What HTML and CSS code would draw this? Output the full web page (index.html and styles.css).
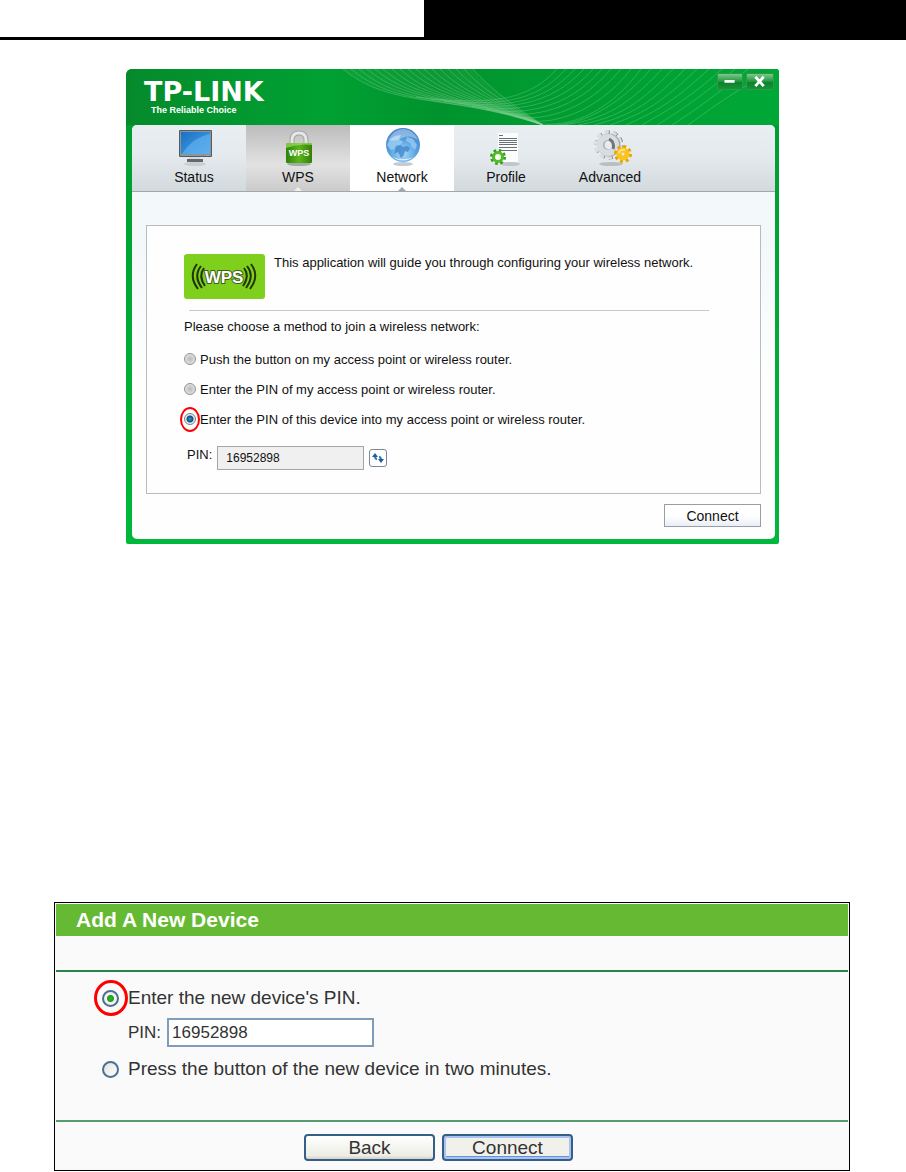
FILE: index.html
```html
<!DOCTYPE html>
<html lang="en">
<head>
    <meta charset="UTF-8">
    <meta name="viewport" content="width=device-width, initial-scale=1.0">
    <title>WPS Setup</title>
    <link rel="stylesheet" href="styles.css">
</head>
<body>
    <header class="page-header">
        <div class="page-header-left"></div>
        <div class="page-header-right"></div>
    </header>

    <!-- Wireless utility -->
    <section class="utility">
        <div class="titlebar">
            <svg class="waves" viewBox="0 0 653 56" preserveAspectRatio="none" aria-hidden="true">
                <path class="wave-fill" d="M217 0C265 40 320 24 417 56C385 35 365 20 347 0Z"/>
                <path class="wave-left" d="M217 0C265 40 320 24 417 56M225 0C271 39 324 25 417 56M233 0C277 38 328 25 417 56M241 0C284 36 332 26 417 56M249 0C290 35 336 27 417 56M257 0C296 34 340 27 417 56M266 0C302 33 344 28 417 56M274 0C308 32 348 29 417 56M282 0C315 30 352 30 417 56M290 0C321 29 356 30 417 56M298 0C327 28 360 31 417 56M306 0C333 27 364 32 417 56M314 0C339 26 368 32 417 56M322 0C346 24 372 33 417 56M330 0C352 23 376 34 417 56M338 0C358 22 380 34 417 56M347 0C365 20 385 35 417 56"/>
                <path class="wave-right" d="M431 0C400 34 360 36 290 28M440 0C408 35 368 38 304 30M449 0C416 36 374 40 318 32M458 0C424 37 380 42 332 34M467 0C434 38 388 44 346 37M476 0C442 40 396 47 360 40M485 0C450 42 404 50 374 43M495 0C458 45 412 53 388 47M505 0C468 48 420 56 400 51M515 0C478 50 436 59 410 54M525 0C488 42 450 58 420 56M536 0C498 42 470 52 436 56M547 0C508 42 484 50 452 56M559 0C520 40 498 48 468 56M571 0C532 38 512 46 484 56M583 0C544 36 526 44 500 56M596 0C560 32 540 42 516 56M609 0C574 28 554 42 531 56M622 0C590 26 568 42 546 56M636 8C602 26 582 42 562 56"/>
            </svg>
            <div class="brand">
                <span class="brand-name">TP-LINK</span>
                <span class="brand-tagline">The Reliable Choice</span>
            </div>
            <div class="window-buttons">
                <button type="button" class="window-button" aria-label="Minimize">
                    <svg viewBox="0 0 26 16"><path d="M7 8H18"/></svg>
                </button>
                <button type="button" class="window-button" aria-label="Close">
                    <svg viewBox="0 0 28 16"><path d="M9 3L18 13M18 3L9 13"/></svg>
                </button>
            </div>
        </div>

        <div class="utility-body">
            <nav class="tabs">
                <a href="#status" class="tab">
                    <svg class="tab-icon" viewBox="0 0 48 40">
                        <defs>
                            <linearGradient id="screen" x1="0" y1="0" x2="1" y2="1">
                                <stop offset="0" stop-color="#1a70c2"/>
                                <stop offset="1" stop-color="#4aa5ec"/>
                            </linearGradient>
                        </defs>
                        <ellipse cx="25" cy="37" rx="11" ry="2" fill="#c9ced1"/>
                        <path d="M19 29H30V33H19Z" fill="#d5dadd"/>
                        <path d="M17 32H33V35H17Z" fill="#62686d"/>
                        <rect x="9" y="3" width="33" height="27" rx="1" fill="#515c66"/>
                        <rect x="10" y="4" width="31" height="25" fill="#8a969e"/>
                        <rect x="11" y="5" width="29" height="22" fill="url(#screen)"/>
                        <path d="M40 7Q23 10 12 27H40Z" fill="#68b7f1" opacity=".6"/>
                        <path d="M36 28.500h3" stroke="#ee8f46"/>
                    </svg>
                    Status
                </a>
                <a href="#wps" class="tab tab-hover">
                    <svg class="tab-icon" viewBox="0 0 48 40">
                        <defs>
                            <linearGradient id="lock">
                                <stop offset="0" stop-color="#2d8308"/>
                                <stop offset=".5" stop-color="#5cb51d"/>
                                <stop offset="1" stop-color="#327f08"/>
                            </linearGradient>
                        </defs>
                        <ellipse cx="25" cy="37" rx="12" ry="2" fill="#a5aaa2"/>
                        <path d="M18 18V13Q18 6 25 6T32 13V18" fill="none" stroke="#a5a5a5" stroke-width="5"/>
                        <path d="M18 18V13Q18 6 25 6T32 13V18" fill="none" stroke="#e6e6e6" stroke-width="3"/>
                        <rect x="12" y="16" width="26" height="20" rx="1" fill="url(#lock)"/>
                        <path d="M12 16H38V18Q25 16 12 21Z" fill="#a4db62" opacity=".7"/>
                        <text x="25" y="29" text-anchor="middle" class="lock-text">WPS</text>
                    </svg>
                    WPS
                </a>
                <a href="#network" class="tab tab-active">
                    <svg class="tab-icon" viewBox="0 0 48 40">
                        <defs>
                            <radialGradient id="globe" cx=".5" cy=".75" r=".75">
                                <stop offset="0" stop-color="#a6dcfa"/>
                                <stop offset=".55" stop-color="#559fe0"/>
                                <stop offset="1" stop-color="#3d80c8"/>
                            </radialGradient>
                        </defs>
                        <ellipse cx="25" cy="37" rx="10" ry="2" fill="#c5cbd1"/>
                        <circle cx="25" cy="18" r="17" fill="url(#globe)"/>
                        <path d="M9 18Q11 12 17 9L23 8 21 12 25 15 22 18 18 18 16 22 13 23Z" fill="#9ccff3" opacity=".8"/>
                        <path d="M18 20L22 18 25 20 29 19 32 21 30 25 27 24 26 28 23 31 20 25 16 27Z" fill="#3b82c7" opacity=".75"/>
                        <path d="M29 10L35 12 39 18 37 23 34 20 32 16 28 14Z" fill="#9ccff3" opacity=".75"/>
                        <path d="M10 13Q17 1 26 2Q36 3 40 13Q31 7 24 11T10 13Z" fill="#fff" opacity=".35"/>
                        <path d="M14 30Q25 37 36 30Q25 34 14 30Z" fill="#e6f8ff" opacity=".8"/>
                    </svg>
                    Network
                </a>
                <a href="#profile" class="tab">
                    <svg class="tab-icon" viewBox="0 0 48 40">
                        <ellipse cx="28" cy="37" rx="10" ry="2" fill="#c0c5c8"/>
                        <path d="M16 6H36V35H16Z" fill="#fbfcfc"/>
                        <path d="M17 8.500H21M17 11.500H35M17 13.500H35M17 15.500H35M17 17.500H35M17 20.500H35M17 23.500H35" stroke="#6a6f73"/>
                        <circle cx="16" cy="30" r="6.500" fill="none" stroke="#2f9e1b" stroke-width="3" stroke-dasharray="2.600 2.500"/>
                        <circle cx="16" cy="30" r="4.500" fill="#f7fbf5" stroke="#52bb27" stroke-width="3"/>
                    </svg>
                    Profile
                </a>
                <a href="#advanced" class="tab">
                    <svg class="tab-icon" viewBox="0 0 48 40">
                        <ellipse cx="25" cy="37" rx="12" ry="2" fill="#b9bec1"/>
                        <circle cx="23" cy="18" r="12" fill="none" stroke="#85898c" stroke-width="5" stroke-dasharray="4.200 3.340"/>
                        <circle cx="22" cy="18" r="12" fill="none" stroke="#dcdfe0" stroke-width="5" stroke-dasharray="4.200 3.340"/>
                        <circle cx="23" cy="18" r="8" fill="none" stroke="#a9adb0" stroke-width="7"/>
                        <circle cx="22" cy="18" r="8" fill="none" stroke="#dadddf" stroke-width="6"/>
                        <path d="M23 12Q29 15 27 22" fill="none" stroke="#6f7579" stroke-width="3"/>
                        <circle cx="37" cy="27" r="7" fill="none" stroke="#e9a400" stroke-width="4" stroke-dasharray="2.800 2.700"/>
                        <circle cx="37" cy="27" r="4" fill="none" stroke="#fbc31c" stroke-width="5"/>
                        <path d="M33 26Q34 22 39 23" fill="none" stroke="#ffe476" stroke-width="2"/>
                    </svg>
                    Advanced
                </a>
            </nav>

            <form class="panel" id="joinForm">
                <div class="intro">
                    <svg class="wps-badge" viewBox="0 0 81 45" role="img" aria-label="WPS logo">
                        <rect width="81" height="45" rx="3" fill="#7fd01c"/>
                        <g fill="none" stroke="#203506" stroke-width="2">
                            <path d="M13 10Q4 22 14 35M17 12Q9 22 18 34M20 14Q14 22 21 32"/>
                            <path d="M67 10Q76 22 66 35M63 12Q71 22 62 34M60 14Q66 22 59 32"/>
                        </g>
                        <text x="40" y="29" text-anchor="middle" class="badge-text">WPS</text>
                    </svg>
                    <p>This application will guide you through configuring your wireless network.</p>
                </div>
                <hr>
                <p class="question">Please choose a method to join a wireless network:</p>
                <label class="method"><input type="radio" name="method">Push the button on my access point or wireless router.</label>
                <label class="method"><input type="radio" name="method">Enter the PIN of my access point or wireless router.</label>
                <label class="method method-marked"><input type="radio" name="method" checked>Enter the PIN of this device into my access point or wireless router.</label>
                <div class="pin-row">
                    <label for="devicePin">PIN:</label>
                    <input type="text" id="devicePin" value="16952898" readonly>
                    <button type="button" class="refresh" aria-label="Generate new PIN">
                        <svg viewBox="0 0 16 16">
                            <path d="M7 9Q5 9 5 6M9 7Q11 7 11 10" fill="none" stroke="#2d76b8" stroke-width="2"/>
                            <path d="M2 7L5 3 8 7ZM8 9H14L11 13Z" fill="#1e5f9f"/>
                        </svg>
                    </button>
                </div>
            </form>
            <div class="actions">
                <button type="submit" form="joinForm" class="connect">Connect</button>
            </div>
        </div>
    </section>

    <!-- Router page -->
    <form class="device">
        <h2>Add A New Device</h2>
        <div class="device-fields">
            <label class="option option-marked"><input type="radio" name="add" checked>Enter the new device's PIN.</label>
            <div class="device-pin">
                <label for="newPin">PIN:</label>
                <input type="text" id="newPin" value="16952898">
            </div>
            <label class="option"><input type="radio" name="add">Press the button of the new device in two minutes.</label>
        </div>
        <div class="device-buttons">
            <button type="button">Back</button>
            <button type="submit" class="focused">Connect</button>
        </div>
    </form>
</body>
</html>
```
FILE: styles.css
```css
*,
*::before,
*::after {
    box-sizing: border-box;
}

body {
    margin: 0;
    background: #fff;
    color: #111;
    font-family: "Liberation Sans", Arial, sans-serif;
    font-size: 13px;
}

p {
    margin: 0;
}

button,
input {
    font-family: inherit;
    color: inherit;
}

/* Page header */
.page-header {
    display: flex;
    height: 40px;
}

.page-header-left {
    width: 424px;
    border-bottom: 3px solid #000;
}

.page-header-right {
    flex: 1;
    background: #000;
}

/* Utility window */
.utility {
    margin: 29px 127px 0 126px;
    padding: 0 4px 5px 6px;
    background: linear-gradient(#009a30, #00b83c);
    border-radius: 6px 3px 2px 2px;
    overflow: hidden;
}

.titlebar {
    position: relative;
    display: flex;
    justify-content: space-between;
    height: 56px;
    margin: 0 -4px 0 -6px;
    padding: 4px 5px 0 18px;
    background: linear-gradient(90deg, #058a2b, #00a133 30%, #00932d 48%, #009a30 60%, #00a837);
}

.waves {
    position: absolute;
    inset: 0;
    width: 100%;
    height: 100%;
    fill: none;
}

.wave-fill {
    fill: #3eb45c;
    opacity: 0.2;
}

.wave-left {
    stroke: #8ad79b;
    opacity: 0.35;
}

.wave-right {
    stroke: #8ad79b;
    opacity: 0.35;
}

.brand {
    position: relative;
    display: flex;
    flex-direction: column;
    padding-top: 6px;
    color: #fff;
    font-weight: bold;
}

.brand-name {
    font-family: "DejaVu Sans", sans-serif;
    font-size: 27px;
    line-height: 26px;
}

.brand-tagline {
    padding-left: 7px;
    font-family: "Liberation Sans", sans-serif;
    font-size: 9px;
    line-height: 10px;
}

.window-buttons {
    position: relative;
    display: flex;
    gap: 3px;
}

.window-button {
    width: 26px;
    height: 17px;
    padding: 0;
    border: 1px solid #2c9a46;
    background: linear-gradient(#7dc890, #23973e 50%, #0b8128 51%, #16933a);
}

.window-button + .window-button {
    width: 28px;
}

.window-button svg {
    display: block;
    fill: none;
    stroke: #fff;
    stroke-width: 3;
}

.utility-body {
    background: linear-gradient(#f3f8fb 66px, #f3f8fb 120px, #fefefe 260px);
    border-radius: 5px;
    overflow: hidden;
}

/* Tabs */
.tabs {
    display: flex;
    height: 67px;
    padding-left: 10px;
    border-bottom: 1px solid #a2a8aa;
    background: linear-gradient(#e8eef1, #e4eaed 45%, #d3dadd);
}

.tab {
    position: relative;
    display: flex;
    flex-direction: column;
    align-items: center;
    width: 104px;
    padding-top: 2px;
    color: #111;
    font-size: 14px;
    line-height: 20px;
    text-decoration: none;
}

.tab-icon {
    width: 48px;
    height: 40px;
}

.tab-hover {
    background: linear-gradient(#bcbcbc, #e2e2e2 60%, #cbcbcb);
}

.tab-active {
    background: #fff;
}

.tab-hover::after,
.tab-active::after {
    content: "";
    position: absolute;
    bottom: 0;
    border: 4px solid transparent;
    border-top: 0;
    border-bottom-color: #eee;
}

.tab-active::after {
    border-bottom-color: #a2a8aa;
}

.lock-text {
    fill: #fff;
    font-size: 9px;
    font-weight: bold;
}

/* WPS panel */
.panel {
    margin: 33px 14px 0;
    padding: 28px 37px 23px;
    border: 1px solid #b9bcbe;
    background: #fefefe;
}

.intro {
    display: flex;
    gap: 9px;
    line-height: 18px;
}

.wps-badge {
    width: 81px;
    height: 45px;
}

.badge-text {
    fill: #fff;
    stroke: #41601d;
    stroke-width: 2;
    paint-order: stroke;
    font-size: 17px;
    font-weight: bold;
}

.panel hr {
    margin: 11px 14px 6px 5px;
    border: 0;
    border-top: 1px solid #c9c9c9;
}

.question {
    line-height: 20px;
    margin-bottom: 7px;
}

.method {
    position: relative;
    display: flex;
    align-items: center;
    gap: 4px;
    height: 30px;
}

.method input {
    appearance: none;
    width: 12px;
    height: 12px;
    margin: 0;
    border: 1px solid #929292;
    border-radius: 50%;
    background: radial-gradient(#b9b9b9, #f1f1f1);
}

.method input:checked {
    border-color: #74828d;
    background: radial-gradient(circle, #2c9cd2 0, #134b73 3px, #e4eaee 4px);
}

/* Red ring round the chosen option */
.method-marked::before,
.option-marked::before {
    content: "";
    position: absolute;
    border: 2px solid #f00;
    border-radius: 50%;
}

.method-marked::before {
    left: -4px;
    width: 20px;
    height: 25px;
}

.pin-row {
    display: flex;
    gap: 5px;
    margin: 12px 0 0 3px;
    line-height: 18px;
}

.pin-row input {
    width: 147px;
    height: 24px;
    padding: 0 8px;
    border: 1px solid #a5a5a5;
    background: #f0f0f0;
    font-size: 12px;
}

.refresh {
    width: 18px;
    height: 18px;
    margin-top: 3px;
    padding: 0;
    border: 1px solid #7c8894;
    border-radius: 3px;
    background: #fff;
}

.refresh svg {
    display: block;
}

.actions {
    display: flex;
    justify-content: flex-end;
    padding: 10px 14px 12px;
}

.connect {
    width: 97px;
    height: 23px;
    padding: 0;
    border: 1px solid #9a9da6;
    background: linear-gradient(#fff 50%, #e9eef6);
    font-size: 14px;
}

/* Add a new device */
.device {
    margin: 358px 56px 0 54px;
    padding: 1px;
    border: 1px solid #000;
    background: #fafafa;
    color: #333;
    font-size: 19px;
}

.device h2 {
    margin: 0 0 34px;
    padding-left: 20px;
    background: #66b932;
    color: #fff;
    font-size: 21px;
    line-height: 32px;
}

.device-fields {
    padding: 9px 0 34px 46px;
    border-top: 2px solid #2b8450;
    border-bottom: 2px solid #559a70;
}

.option {
    position: relative;
    display: flex;
    align-items: center;
    gap: 9px;
    height: 34px;
}

.option input {
    appearance: none;
    width: 17px;
    height: 17px;
    margin: 0;
    border: 2px solid #4a7095;
    border-radius: 50%;
    background: linear-gradient(135deg, #e2e2dc, #fff);
}

.option input:checked {
    background: radial-gradient(circle, #35b531 0, #1f9c1d 3px, #f2f2ee 4px);
}

.option-marked::before {
    left: -8px;
    width: 34px;
    height: 36px;
    border-width: 3px;
}

.device-pin {
    display: flex;
    align-items: center;
    gap: 6px;
    margin: 3px 0 5px 26px;
    font-size: 17px;
}

.device-pin input {
    width: 207px;
    height: 29px;
    padding: 0 3px;
    border: 2px solid #7f9db9;
    background: #fff;
    font-size: 17px;
}

.device-buttons {
    display: flex;
    justify-content: center;
    gap: 7px;
    padding: 12px 27px 8px 0;
}

.device-buttons button {
    width: 131px;
    height: 27px;
    padding: 0;
    border: 2px solid #335f88;
    border-radius: 4px;
    background: linear-gradient(#fff, #edede6 85%, #d5cfc3);
    font-size: 19px;
    line-height: 20px;
}

.device-buttons .focused {
    background: #f1f1ec;
    box-shadow: inset 0 0 0 2px #a9c2f2, inset 0 -3px 0 #6d8fe0;
}
```
